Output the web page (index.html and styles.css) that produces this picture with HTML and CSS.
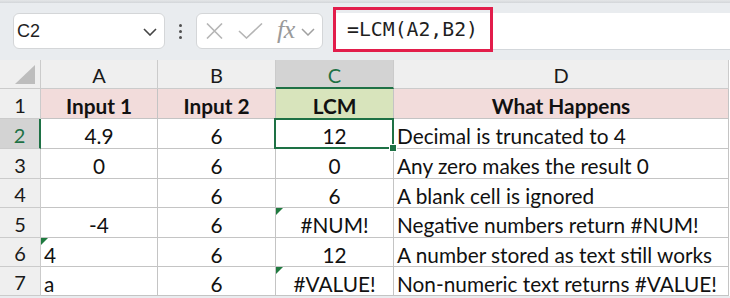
FILE: index.html
```html
<!DOCTYPE html>
<html>
<head>
<meta charset="utf-8">
<link rel="stylesheet" href="styles.css">
</head>
<body>
<div class="app">
  <div class="topline"></div>
  <div class="toolbar">
    <div class="namebox">
      <span class="name">C2</span>
      <svg class="chev" width="14" height="8" viewBox="0 0 14 8"><path d="M1 1 L7 7 L13 1" fill="none" stroke="#444" stroke-width="1.6"/></svg>
    </div>
    <div class="grip"><i></i><i></i><i></i></div>
    <div class="fxbox">
      <svg class="ic-x" width="17" height="16" viewBox="0 0 17 16"><path d="M1 0.5 L16 15.5 M16 0.5 L1 15.5" fill="none" stroke="#b5b5b5" stroke-width="1.6"/></svg>
      <svg class="ic-check" width="25" height="16" viewBox="0 0 25 16"><path d="M1 8 L8.5 15 L24 0.5" fill="none" stroke="#b5b5b5" stroke-width="1.6"/></svg>
      <span class="fx">fx</span>
      <svg class="chev2" width="14" height="8" viewBox="0 0 14 8"><path d="M1 1 L7 7 L13 1" fill="none" stroke="#a0a0a0" stroke-width="1.5"/></svg>
    </div>
    <div class="formula">
      <div class="formula-hl">=LCM(A2,B2)</div>
    </div>
  </div>
  <div class="sheet">
    <div class="hd corner"><svg width="20" height="19" viewBox="0 0 20 19"><path d="M20 0 L20 19 L0 19 Z" fill="#bdbdbd"/></svg></div>
    <div class="hd col">A</div>
    <div class="hd col">B</div>
    <div class="hd col sel-col">C</div>
    <div class="hd col">D</div>

    <div class="hd row">1</div>
    <div class="c title">Input 1</div>
    <div class="c title">Input 2</div>
    <div class="c title green">LCM</div>
    <div class="c title">What Happens</div>

    <div class="hd row sel-row">2</div>
    <div class="c ctr">4.9</div>
    <div class="c ctr">6</div>
    <div class="c ctr active">12<span class="handle"></span></div>
    <div class="c left">Decimal is truncated to 4</div>

    <div class="hd row">3</div>
    <div class="c ctr">0</div>
    <div class="c ctr">6</div>
    <div class="c ctr">0</div>
    <div class="c left">Any zero makes the result 0</div>

    <div class="hd row">4</div>
    <div class="c ctr"></div>
    <div class="c ctr">6</div>
    <div class="c ctr">6</div>
    <div class="c left">A blank cell is ignored</div>

    <div class="hd row">5</div>
    <div class="c ctr">-4</div>
    <div class="c ctr">6</div>
    <div class="c ctr flag">#NUM!</div>
    <div class="c left">Negative numbers return #NUM!</div>

    <div class="hd row">6</div>
    <div class="c left flag">4</div>
    <div class="c ctr">6</div>
    <div class="c ctr">12</div>
    <div class="c left">A number stored as text still works</div>

    <div class="hd row">7</div>
    <div class="c left">a</div>
    <div class="c ctr">6</div>
    <div class="c ctr flag">#VALUE!</div>
    <div class="c left">Non-numeric text returns #VALUE!</div>
  </div>
</div>
</body>
</html>
```

FILE: styles.css
```css
html, body {
  margin: 0;
  padding: 0;
  background: #ffffff;
}
.app {
  width: 730px;
  height: 298px;
  overflow: hidden;
  background: #e9ecef;
}
.topline {
  height: 3px;
  background: linear-gradient(#e4e6e8, #d3d6d9);
}
.toolbar {
  height: 57px;
  box-sizing: border-box;
  padding-top: 10px;
  display: flex;
  align-items: flex-start;
}
.namebox {
  margin-left: 13px;
  width: 152px;
  height: 36px;
  box-sizing: border-box;
  background: #fff;
  border: 1px solid #d4d6d8;
  border-radius: 6px;
  display: flex;
  align-items: center;
  padding-left: 3px;
}
.name {
  font-family: "Liberation Sans", Arial, sans-serif;
  font-size: 18px;
  color: #1f1f1f;
  flex: 1;
}
.chev {
  margin-right: 7px;
  margin-top: 2px;
}
.grip {
  width: 31px;
  height: 36px;
  display: flex;
  flex-direction: column;
  align-items: center;
  justify-content: center;
  gap: 3px;
}
.grip i {
  display: block;
  width: 3px;
  height: 3px;
  border-radius: 50%;
  background: #505050;
}
.fxbox {
  width: 127px;
  height: 36px;
  box-sizing: border-box;
  background: #fff;
  border: 1px solid #d4d6d8;
  border-radius: 6px;
  display: flex;
  align-items: center;
  padding-left: 9px;
}
.ic-check {
  margin-left: 15px;
}
.fx {
  font-family: "Liberation Serif", "DejaVu Serif", serif;
  font-style: italic;
  font-size: 26px;
  color: #9a9a9a;
  margin-left: 14px;
  margin-top: -3px;
  letter-spacing: -0.5px;
}
.chev2 {
  margin-left: 6px;
  margin-top: 1px;
}
.formula {
  flex: 1;
  margin-left: 10px;
  height: 36px;
  background: #fff;
  border-bottom: 1px solid #d3d7db;
  display: flex;
  align-items: flex-start;
}
.formula-hl {
  margin-top: -6px;
  width: 160px;
  height: 45px;
  box-sizing: border-box;
  border: 3px solid #e21d4b;
  padding-left: 11px;
  font-family: "DejaVu Sans Mono", "Liberation Mono", monospace;
  font-size: 19.8px;
  color: #1f1f1f;
  display: flex;
  align-items: center;
}
.sheet {
  display: grid;
  grid-template-columns: 41px 117px 118px 118px 335px;
  grid-template-rows: 29px 30px 30px 30px 29px 30px 29px 29px;
  background: #fff;
  font-family: Lato, "Liberation Sans", sans-serif;
  color: #111;
}
.sheet > div {
  box-sizing: border-box;
  border-right: 1px solid #c4c4c4;
  border-bottom: 1px solid #c4c4c4;
  position: relative;
  display: flex;
  align-items: center;
  white-space: nowrap;
}
.hd {
  background: #efefef;
  justify-content: center;
  font-size: 20px;
  color: #1a1a1a;
  border-color: #cbcbcb !important;
  padding-top: 2px;
}
.corner {
  align-items: flex-end !important;
  justify-content: flex-end !important;
  padding: 0 5px 4px 0;
}
.corner svg {
  display: block;
}
.sel-col {
  background: #d3d3d3;
  color: #1e7145;
  border-bottom: 2px solid #1e7145 !important;
}
.sel-row {
  background: #d3d3d3;
  color: #1e7145;
  border-right: 2px solid #1e7145 !important;
}
.c {
  font-size: 20.8px;
  padding-top: 4px;
}
.title {
  background: #f2dcdb;
  font-weight: bold;
  justify-content: center;
}
.title.green {
  background: #d8e4bc;
}
.ctr {
  justify-content: center;
}
.left {
  justify-content: flex-start;
  padding-left: 3px;
}
.active::after {
  content: "";
  position: absolute;
  left: -2px;
  top: -1px;
  right: -1px;
  bottom: -1px;
  border: 2px solid #1e7145;
}
.handle {
  position: absolute;
  right: -4px;
  bottom: -4px;
  width: 6px;
  height: 6px;
  background: #1e7145;
  border: 1px solid #fff;
  z-index: 2;
}
.flag::before {
  content: "";
  position: absolute;
  left: 0;
  top: 0;
  border-top: 7px solid #1f7a3f;
  border-right: 7px solid transparent;
}
```
